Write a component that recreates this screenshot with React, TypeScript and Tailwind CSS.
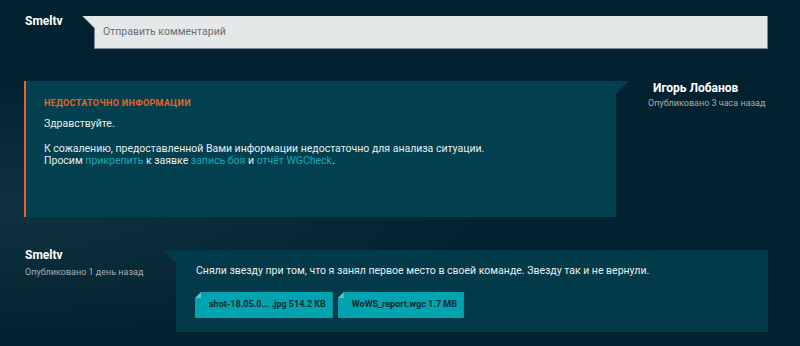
import React from "react";

const font = { fontFamily: "Roboto, 'Noto Sans', sans-serif" };

function Chip({ label }: { label: string }) {
  return (
    <div className="relative shrink-0 h-[26px] flex items-center pl-[14px] pr-[7px] bg-[#00a3ae] text-[9px] font-bold text-[#0b2b33] whitespace-nowrap [clip-path:polygon(6px_0,100%_0,100%_100%,0_100%,0_6px)]">
      <div className="absolute left-0 top-0 w-[6px] h-[6px] bg-[#5fc6cd] [clip-path:polygon(0_100%,100%_0,100%_100%)]" />
      {label}
    </div>
  );
}

export default function App() {
  return (
    <div
      className="w-[800px] h-[346px] overflow-hidden bg-[#03222f] text-white relative"
      style={font}
    >
      <div className="absolute inset-0 bg-[radial-gradient(ellipse_at_0%_60%,rgba(40,80,95,0.35),transparent_45%)] pointer-events-none" />
      <div className="relative flex flex-col pt-[16px]">
        {/* Row 1 */}
        <div className="flex">
          <div className="w-[82px] shrink-0 pl-[25px] text-[12px] font-bold leading-[10px]">Smeltv</div>
          <div className="w-[686px] shrink-0 h-[33px] bg-[#7b8a90] [clip-path:polygon(0_0,100%_0,100%_100%,12px_100%,12px_12px)]">
            <div className="h-[32px] w-[685px] bg-[#e4e8e9] [clip-path:polygon(1px_0,100%_0,100%_100%,13px_100%,13px_12px)] flex items-center pl-[21px] text-[10.5px] text-[#6b6f72]">
              Отправить комментарий
            </div>
          </div>
        </div>

        {/* Row 2 */}
        <div className="flex mt-[32px]">
          <div className="ml-[24px] shrink-0 w-[592px] h-[136px] bg-[#03404f] border-l-2 border-[#e8622a] pl-[18px] pt-[16px]">
            <div className="text-[9px] font-bold tracking-[0.35px] text-[#e8622a] leading-[12px]">
              НЕДОСТАТОЧНО ИНФОРМАЦИИ
            </div>
            <div className="mt-[9px] text-[10.5px] leading-[12px] text-[#e8eef0]">
              <p>Здравствуйте.</p>
              <p className="mt-[13px]">
                К сожалению, предоставленной Вами информации недостаточно для анализа ситуации.
              </p>
              <p>
                Просим <span className="text-[#19a9b8]">прикрепить</span> к заявке{" "}
                <span className="text-[#19a9b8]">запись боя</span> и{" "}
                <span className="text-[#19a9b8]">отчёт WGCheck</span>.
              </p>
            </div>
          </div>
          <div className="w-[13px] shrink-0 h-[13px] bg-[#03404f] [clip-path:polygon(0_0,100%_0,0_100%)]" />
          <div className="ml-[19px] flex flex-col">
            <div className="ml-[5px] text-[12px] font-bold leading-[14px] whitespace-nowrap">Игорь Лобанов</div>
            <div className="mt-[2px] text-[9px] text-[#a3aeb3] leading-[12px] whitespace-nowrap">Опубликовано 3 часа назад</div>
          </div>
        </div>

        {/* Row 3 */}
        <div className="flex mt-[33px]">
          <div className="w-[163px] shrink-0 pl-[25px] flex flex-col">
            <div className="text-[12px] font-bold leading-[10px]">Smeltv</div>
            <div className="mt-[6px] text-[9px] text-[#a3aeb3] leading-[12px] whitespace-nowrap">Опубликовано 1 день назад</div>
          </div>
          <div className="w-[13px] shrink-0 h-[13px] bg-[#033a49] [clip-path:polygon(0_0,100%_0,100%_100%)]" />
          <div className="w-[592px] shrink-0 h-[82px] bg-[#033a49] pl-[20px] pt-[14px]">
            <div className="text-[10.5px] leading-[14px] text-[#e8eef0] whitespace-nowrap">
              Сняли звезду при том, что я занял первое место в своей команде. Звезду так и не вернули.
            </div>
            <div className="flex gap-[5px] mt-[14px] ml-[-1px]">
              <Chip label="shot-18.05.0... .jpg 514.2 KB" />
              <Chip label="WoWS_report.wgc 1.7 MB" />
            </div>
          </div>
        </div>
      </div>
    </div>
  );
}
